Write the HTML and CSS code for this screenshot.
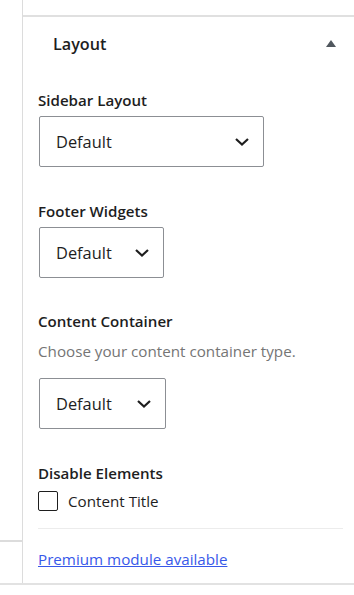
FILE: index.html
```html
<!DOCTYPE html>
<html>
<head>
<meta charset="utf-8">
<link rel="stylesheet" href="styles.css">
</head>
<body>
<div class="wrap">
  <div class="side">
    <div class="side-line"></div>
  </div>
  <div class="panel">
    <div class="panel-top"></div>
    <div class="panel-body">
      <div class="head">
        <span class="head-title">Layout</span>
        <svg class="tri" width="10" height="7" viewBox="0 0 10 7"><path d="M5 0 L10 7 L0 7 Z" fill="#50575e"/></svg>
      </div>
      <div class="field f1">
        <div class="label">Sidebar Layout</div>
        <div class="select w1"><span>Default</span><svg width="14" height="8" viewBox="0 0 14 8"><path d="M1 1 L7 6.5 L13 1" fill="none" stroke="#1e1e1e" stroke-width="2.2"/></svg></div>
      </div>
      <div class="field f2">
        <div class="label">Footer Widgets</div>
        <div class="select w2"><span>Default</span><svg width="14" height="8" viewBox="0 0 14 8"><path d="M1 1 L7 6.5 L13 1" fill="none" stroke="#1e1e1e" stroke-width="2.2"/></svg></div>
      </div>
      <div class="field f3">
        <div class="label">Content Container</div>
        <div class="desc">Choose your content container type.</div>
        <div class="select w3"><span>Default</span><svg width="14" height="8" viewBox="0 0 14 8"><path d="M1 1 L7 6.5 L13 1" fill="none" stroke="#1e1e1e" stroke-width="2.2"/></svg></div>
      </div>
      <div class="field f4">
        <div class="label">Disable Elements</div>
        <label class="check"><span class="box"></span><span>Content Title</span></label>
      </div>
      <div class="sep"></div>
      <a class="link" href="#">Premium module available</a>
    </div>
  </div>
</div>
</body>
</html>
```
FILE: styles.css
```css
html, body {
  margin: 0;
  padding: 0;
  background: #fff;
}
body {
  font-family: "Open Sans", "Noto Sans", sans-serif;
  color: #1e1e1e;
  width: 354px;
  height: 595px;
  overflow: hidden;
}
.wrap {
  display: flex;
  height: 583px;
  border-bottom: 2px solid #e2e2e2;
}
.side {
  width: 22px;
  border-right: 1px solid #dcdcdc;
  display: flex;
  flex-direction: column;
}
.side-line {
  margin-top: 540px;
  height: 2px;
  background: #dcdcdc;
}
.panel {
  flex: 1;
  display: flex;
  flex-direction: column;
}
.panel-top {
  height: 15px;
  border-bottom: 2px solid #e0e0e0;
}
.panel-body {
  padding: 0 11px 0 15px;
}
.head {
  display: flex;
  align-items: center;
  justify-content: space-between;
  height: 54px;
  padding: 0 7px 0 15px;
}
.head-title {
  font-size: 16.2px;
  font-weight: 600;
}
.tri {
  display: block;
  margin-top: -1px;
}
.f1 { margin-top: 19px; }
.f2 { margin-top: 34px; }
.f3 { margin-top: 33px; }
.f4 { margin-top: 34px; }
.label {
  font-size: 15.1px;
  font-weight: 600;
  line-height: 20px;
}
.desc {
  font-size: 15.2px;
  color: #757575;
  line-height: 20px;
  margin-top: 10px;
}
.select {
  box-sizing: border-box;
  height: 51px;
  margin-top: 6px;
  margin-left: 1px;
  border: 1px solid #8c8f94;
  border-radius: 2px;
  display: flex;
  align-items: center;
  justify-content: space-between;
  padding: 0 14px 0 16px;
  font-size: 16.4px;
}
.desc + .select {
  margin-top: 17px;
}
.select svg {
  display: block;
}
.w1 { width: 225px; }
.w2 { width: 125px; }
.w3 { width: 127px; }
.check {
  display: flex;
  align-items: center;
  gap: 10px;
  margin-top: 8px;
  font-size: 15.2px;
  line-height: 20px;
}
.box {
  box-sizing: border-box;
  width: 20px;
  height: 20px;
  border: 1px solid #1e1e1e;
  border-radius: 2px;
}
.sep {
  height: 1px;
  background: #ececec;
  margin-top: 17px;
}
.link {
  display: block;
  margin-top: 20px;
  font-size: 15.2px;
  color: #3858e9;
  text-decoration: underline;
  line-height: 20px;
}
```
